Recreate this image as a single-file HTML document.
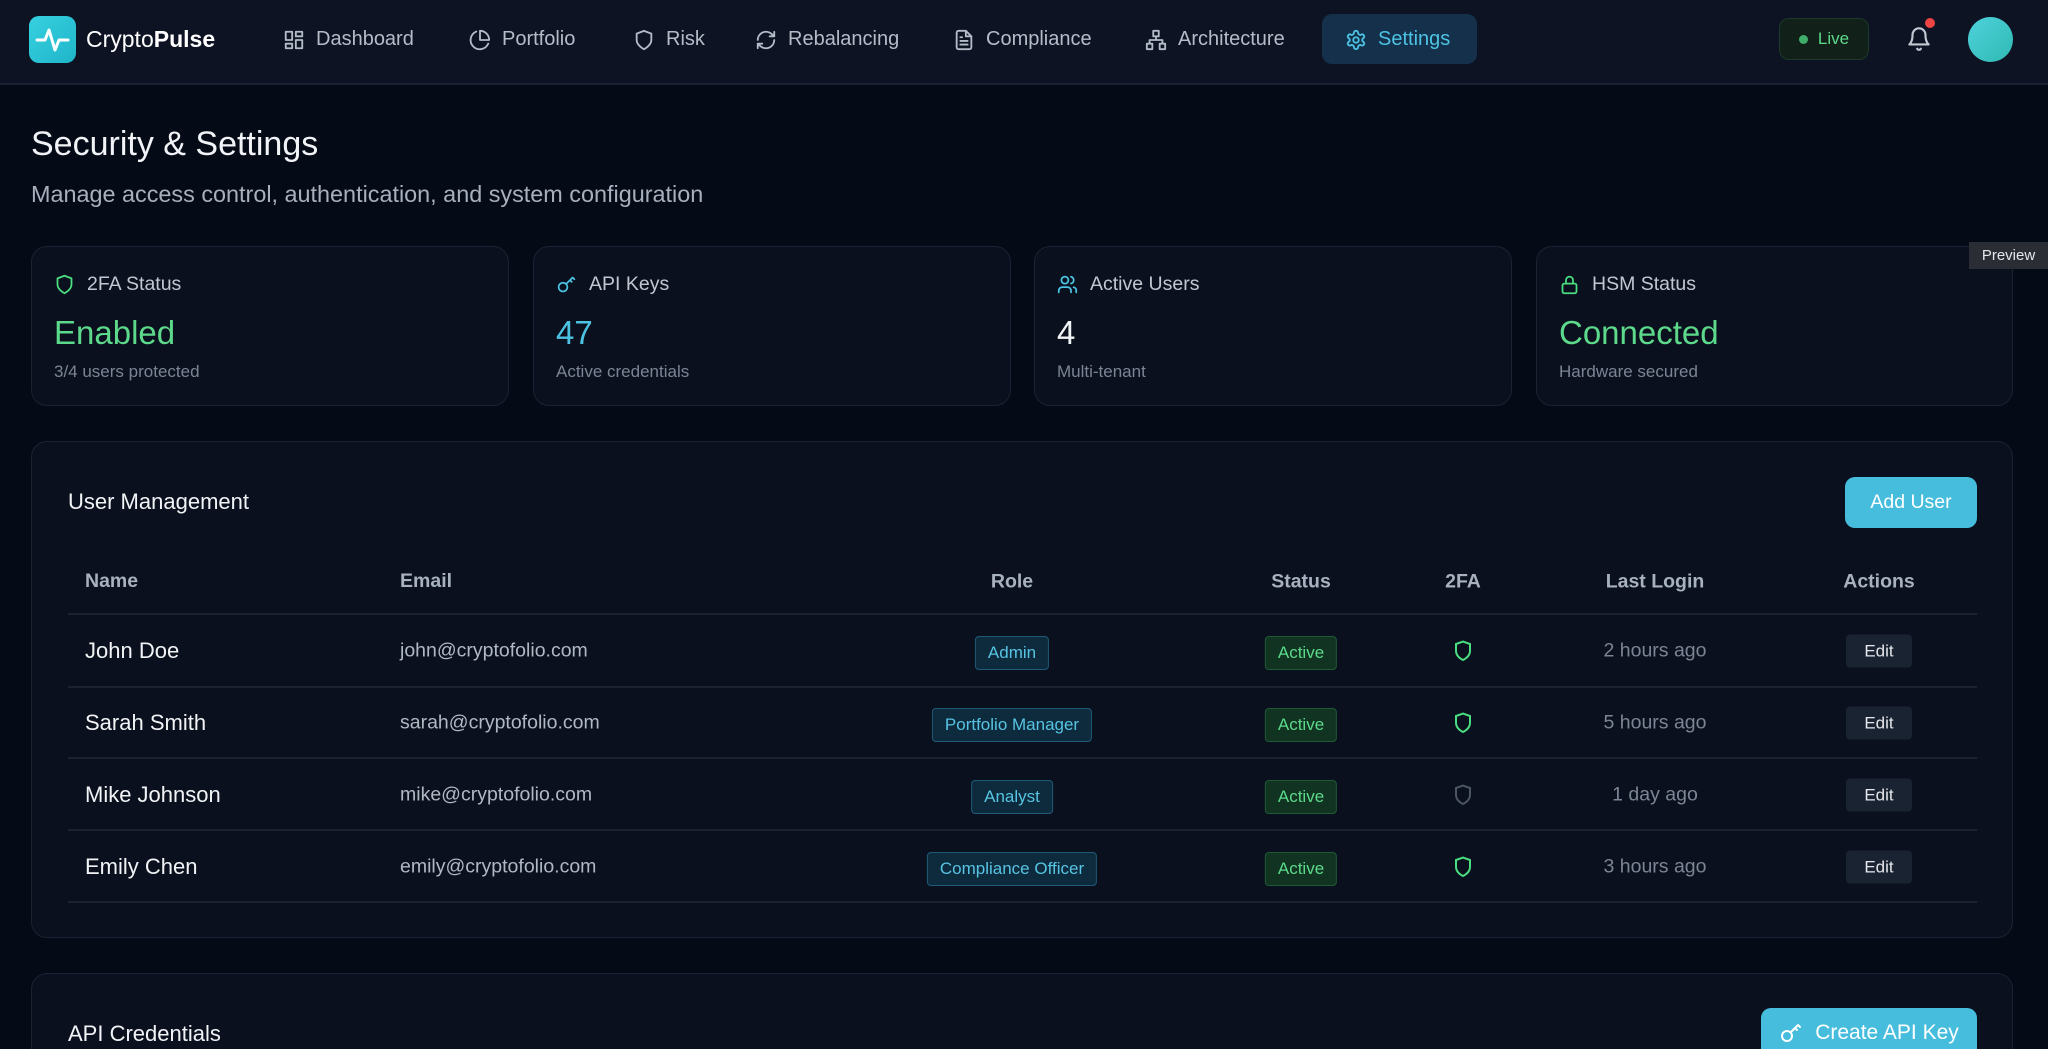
<!DOCTYPE html>
<html style="width:2048px;height:1049px;overflow:hidden"><head><meta charset="utf-8"><style>
*{box-sizing:border-box;margin:0;padding:0}
body{width:2048px;height:1049px;overflow:hidden;background:#050a17;font-family:"Liberation Sans",sans-serif;color:#e5e7eb;position:relative}
.a{position:absolute}
.nav{left:0;top:0;width:2048px;height:85px;background:#0d1323;border-bottom:2px solid #1a2234}
.ni{position:absolute;top:-3px;height:85px;display:flex;align-items:center;font-size:20px;color:#b4bcc8}
.ni svg{width:22px;height:22px;margin-right:11px;stroke:#b4bcc8;fill:none;stroke-width:2;stroke-linecap:round;stroke-linejoin:round}
.card{position:absolute;background:#0a101d;border:1.5px solid #1a2333;border-radius:16px}
.sl{position:absolute;left:22px;top:26px;font-size:19.5px;color:#c2c8d2;display:flex;align-items:center}
.sl svg{width:21px;height:21px;margin-right:12px;fill:none;stroke-width:2;stroke-linecap:round;stroke-linejoin:round}
.sv{position:absolute;left:22px;top:67px;font-size:33px}
.ss{position:absolute;left:22px;top:115px;font-size:17px;color:#7c8595}
.th{position:absolute;top:570px;font-size:19.5px;font-weight:bold;color:#a8b1bf}
.row{position:absolute;left:68px;width:1909px;height:1.5px;background:#1b2333}
.cell{position:absolute;transform:translateY(-50%)}
.badge{position:absolute;transform:translate(-50%,-50%);height:34px;padding:0 12px;border-radius:4px;font-size:17px;display:flex;align-items:center;white-space:nowrap}
.role{background:#0e2a3d;border:1.5px solid #1f5a76;color:#56c4e2}
.act{background:#103421;border:1.5px solid #1f5a37;color:#5cd98a}
.edit{background:#1a2332;color:#e5e7eb;width:66px;height:33px;justify-content:center;padding:0}
.ctr{transform:translate(-50%,-50%)}
</style></head><body>
<div class="a nav">
 <div class="a" style="left:29px;top:16px;width:47px;height:47px;border-radius:10px;background:linear-gradient(135deg,#36d1e0,#1fb5c9)">
  <svg width="47" height="47" viewBox="0 0 47 47" fill="none" stroke="#fff" stroke-width="3" stroke-linecap="round" stroke-linejoin="round"><path d="M8 24h8l4-10 6 20 4-10h9"/></svg>
 </div>
 <div class="a" style="left:86px;top:26px;font-size:23px;color:#fff">Crypto<b>Pulse</b></div>
 <div class="ni" style="left:283px"><svg viewBox="0 0 24 24"><rect x="3" y="3" width="7" height="9"/><rect x="14" y="3" width="7" height="5"/><rect x="14" y="12" width="7" height="9"/><rect x="3" y="16" width="7" height="5"/></svg>Dashboard</div>
 <div class="ni" style="left:469px"><svg viewBox="0 0 24 24"><path d="M21 15.9A10 10 0 1 1 8 2.8"/><path d="M22 12A10 10 0 0 0 12 2v10z"/></svg>Portfolio</div>
 <div class="ni" style="left:633px"><svg viewBox="0 0 24 24"><path d="M12 22s8-4 8-10V5l-8-3-8 3v7c0 6 8 10 8 10z"/></svg>Risk</div>
 <div class="ni" style="left:755px"><svg viewBox="0 0 24 24"><path d="M3 12a9 9 0 0 1 15-6.7L21 8M21 3v5h-5M21 12a9 9 0 0 1-15 6.7L3 16M8 16H3v5"/></svg>Rebalancing</div>
 <div class="ni" style="left:953px"><svg viewBox="0 0 24 24"><path d="M14 2H6a2 2 0 0 0-2 2v16a2 2 0 0 0 2 2h12a2 2 0 0 0 2-2V8z"/><path d="M14 2v6h6M8 13h8M8 17h8M8 9h2"/></svg>Compliance</div>
 <div class="ni" style="left:1145px"><svg viewBox="0 0 24 24"><rect x="9" y="2" width="6" height="6"/><rect x="2" y="16" width="6" height="6"/><rect x="16" y="16" width="6" height="6"/><path d="M5 16v-4h14v4M12 8v4"/></svg>Architecture</div>
 <div class="a" style="left:1322px;top:14px;width:155px;height:50px;border-radius:10px;background:#15304a"></div>
 <div class="ni" style="left:1345px;color:#4cc3e3"><svg viewBox="0 0 24 24" style="stroke:#4cc3e3"><circle cx="12" cy="12" r="3"/><path d="M12.2 2h-.4a2 2 0 0 0-2 2v.2a2 2 0 0 1-1 1.7l-.4.3a2 2 0 0 1-2 0l-.2-.1a2 2 0 0 0-2.7.7l-.2.4a2 2 0 0 0 .7 2.7l.2.1a2 2 0 0 1 1 1.7v.5a2 2 0 0 1-1 1.700l-.2.1a2 2 0 0 0-.7 2.7l.2.4a2 2 0 0 0 2.7.7l.2-.1a2 2 0 0 1 2 0l.4.3a2 2 0 0 1 1 1.7v.2a2 2 0 0 0 2 2h.4a2 2 0 0 0 2-2v-.2a2 2 0 0 1 1-1.7l.4-.3a2 2 0 0 1 2 0l.2.1a2 2 0 0 0 2.7-.7l.2-.4a2 2 0 0 0-.7-2.7l-.2-.1a2 2 0 0 1-1-1.7v-.5a2 2 0 0 1 1-1.7l.2-.1a2 2 0 0 0 .7-2.7l-.2-.4a2 2 0 0 0-2.7-.7l-.2.1a2 2 0 0 1-2 0l-.4-.3a2 2 0 0 1-1-1.7V4a2 2 0 0 0-2-2z"/></svg>Settings</div>
 <div class="a" style="left:1779px;top:18px;width:90px;height:42px;border-radius:10px;background:#112019;border:1.5px solid #1d3a2a;display:flex;align-items:center;justify-content:center;font-size:17px;color:#5cd98a"><span style="width:9px;height:9px;border-radius:50%;background:#3fae6a;margin-right:10px"></span>Live</div>
 <svg class="a" style="left:1906px;top:24px" width="26" height="28" viewBox="0 0 24 26" fill="none" stroke="#c2c8d2" stroke-width="2" stroke-linecap="round" stroke-linejoin="round"><path d="M6 10a6 6 0 0 1 12 0c0 7 3 9 3 9H3s3-2 3-9M10.3 23a2 2 0 0 0 3.4 0"/></svg>
 <div class="a" style="left:1925px;top:18px;width:10px;height:10px;border-radius:50%;background:#ef4444"></div>
 <div class="a" style="left:1968px;top:17px;width:45px;height:45px;border-radius:50%;background:linear-gradient(135deg,#4fd2dc,#2fb9b2)"></div>
</div>

<div class="a" style="left:31px;top:125px;font-size:34px;color:#f1f3f6">Security &amp; Settings</div>
<div class="a" style="left:31px;top:181px;font-size:23.4px;color:#a8b0bd">Manage access control, authentication, and system configuration</div>

<div class="card" style="left:31px;top:246px;width:478px;height:160px">
 <div class="sl"><svg viewBox="0 0 24 24" stroke="#4ade80"><path d="M12 22s8-4 8-10V5l-8-3-8 3v7c0 6 8 10 8 10z"/></svg>2FA Status</div>
 <div class="sv" style="color:#5cd98a">Enabled</div><div class="ss">3/4 users protected</div></div>
<div class="card" style="left:533px;top:246px;width:478px;height:160px">
 <div class="sl"><svg viewBox="0 0 24 24" stroke="#4cc3e3"><circle cx="8" cy="15" r="5"/><path d="M11.5 11.5 19 4M16 7l2 2M19 4l2 2"/></svg>API Keys</div>
 <div class="sv" style="color:#4cc3e3">47</div><div class="ss">Active credentials</div></div>
<div class="card" style="left:1034px;top:246px;width:478px;height:160px">
 <div class="sl"><svg viewBox="0 0 24 24" stroke="#4cc3e3"><circle cx="9" cy="7" r="4"/><path d="M2 21v-2a4 4 0 0 1 4-4h6a4 4 0 0 1 4 4v2M16 3.1a4 4 0 0 1 0 7.8M22 21v-2a4 4 0 0 0-3-3.9"/></svg>Active Users</div>
 <div class="sv" style="color:#f1f3f6">4</div><div class="ss">Multi-tenant</div></div>
<div class="card" style="left:1536px;top:246px;width:477px;height:160px">
 <div class="sl"><svg viewBox="0 0 24 24" stroke="#4ade80"><rect x="4" y="11" width="16" height="11" rx="2"/><path d="M8 11V7a4 4 0 0 1 8 0v4"/></svg>HSM Status</div>
 <div class="sv" style="color:#5cd98a">Connected</div><div class="ss">Hardware secured</div></div>
<div class="a" style="left:1969px;top:242px;width:79px;height:27px;background:#2a2d33;color:#e5e7eb;font-size:15px;display:flex;align-items:center;justify-content:center">Preview</div>

<div class="card" style="left:31px;top:441px;width:1982px;height:497px"></div>
<div class="a" style="left:68px;top:489px;font-size:22px;color:#f1f3f6">User Management</div>
<div class="a" style="left:1845px;top:477px;width:132px;height:51px;border-radius:10px;background:#46bddc;color:#fff;font-size:19.5px;display:flex;align-items:center;justify-content:center">Add User</div>

<div class="th" style="left:85px">Name</div>
<div class="th" style="left:400px">Email</div>
<div class="th ctr" style="left:1012px;top:582px">Role</div>
<div class="th ctr" style="left:1301px;top:582px">Status</div>
<div class="th ctr" style="left:1463px;top:582px">2FA</div>
<div class="th ctr" style="left:1655px;top:582px">Last Login</div>
<div class="th ctr" style="left:1879px;top:582px">Actions</div>
<div class="row" style="top:613px"></div>
<div class="row" style="top:686px"></div>
<div class="row" style="top:757px"></div>
<div class="row" style="top:829px"></div>
<div class="row" style="top:901px"></div>

<div class="cell" style="left:85px;top:651px;font-size:22px;color:#f1f3f6">John Doe</div>
<div class="cell" style="left:400px;top:651px;font-size:19.5px;color:#b0b8c4">john@cryptofolio.com</div>
<div class="badge role" style="left:1012px;top:653px">Admin</div>
<div class="badge act" style="left:1301px;top:653px">Active</div>
<svg class="a" style="left:1454px;top:640px" width="18" height="22" viewBox="0 0 18 22" fill="none" stroke="#4ade80" stroke-width="2"><path d="M9 20s7-3 7-9V4L9 1.5 2 4v7c0 6 7 9 7 9z"/></svg>
<div class="cell ctr" style="left:1655px;top:651px;font-size:19.5px;color:#7c8595">2 hours ago</div>
<div class="badge edit" style="left:1879px;top:651px">Edit</div>

<div class="cell" style="left:85px;top:723px;font-size:22px;color:#f1f3f6">Sarah Smith</div>
<div class="cell" style="left:400px;top:723px;font-size:19.5px;color:#b0b8c4">sarah@cryptofolio.com</div>
<div class="badge role" style="left:1012px;top:725px">Portfolio Manager</div>
<div class="badge act" style="left:1301px;top:725px">Active</div>
<svg class="a" style="left:1454px;top:712px" width="18" height="22" viewBox="0 0 18 22" fill="none" stroke="#4ade80" stroke-width="2"><path d="M9 20s7-3 7-9V4L9 1.5 2 4v7c0 6 7 9 7 9z"/></svg>
<div class="cell ctr" style="left:1655px;top:723px;font-size:19.5px;color:#7c8595">5 hours ago</div>
<div class="badge edit" style="left:1879px;top:723px">Edit</div>

<div class="cell" style="left:85px;top:795px;font-size:22px;color:#f1f3f6">Mike Johnson</div>
<div class="cell" style="left:400px;top:795px;font-size:19.5px;color:#b0b8c4">mike@cryptofolio.com</div>
<div class="badge role" style="left:1012px;top:797px">Analyst</div>
<div class="badge act" style="left:1301px;top:797px">Active</div>
<svg class="a" style="left:1454px;top:784px" width="18" height="22" viewBox="0 0 18 22" fill="none" stroke="#4b5563" stroke-width="2"><path d="M9 20s7-3 7-9V4L9 1.5 2 4v7c0 6 7 9 7 9z"/></svg>
<div class="cell ctr" style="left:1655px;top:795px;font-size:19.5px;color:#7c8595">1 day ago</div>
<div class="badge edit" style="left:1879px;top:795px">Edit</div>

<div class="cell" style="left:85px;top:867px;font-size:22px;color:#f1f3f6">Emily Chen</div>
<div class="cell" style="left:400px;top:867px;font-size:19.5px;color:#b0b8c4">emily@cryptofolio.com</div>
<div class="badge role" style="left:1012px;top:869px">Compliance Officer</div>
<div class="badge act" style="left:1301px;top:869px">Active</div>
<svg class="a" style="left:1454px;top:856px" width="18" height="22" viewBox="0 0 18 22" fill="none" stroke="#4ade80" stroke-width="2"><path d="M9 20s7-3 7-9V4L9 1.5 2 4v7c0 6 7 9 7 9z"/></svg>
<div class="cell ctr" style="left:1655px;top:867px;font-size:19.5px;color:#7c8595">3 hours ago</div>
<div class="badge edit" style="left:1879px;top:867px">Edit</div>

<div class="card" style="left:31px;top:973px;width:1982px;height:76px;border-bottom:none;border-radius:16px 16px 0 0"></div>
<div class="a" style="left:68px;top:1021px;font-size:22px;color:#f1f3f6">API Credentials</div>
<div class="a" style="left:1761px;top:1008px;width:216px;height:41px;border-radius:10px 10px 0 0;background:#46bddc;color:#fff;font-size:21px;display:flex;align-items:flex-start;padding-top:13px;justify-content:center;overflow:hidden">
 <svg width="24" height="24" viewBox="0 0 24 24" fill="none" stroke="#fff" stroke-width="2" stroke-linecap="round" style="margin-right:12px"><circle cx="8" cy="15" r="5"/><path d="M11.5 11.5 19 4M16 7l2 2M19 4l2 2"/></svg>Create API Key</div>
</body></html>
